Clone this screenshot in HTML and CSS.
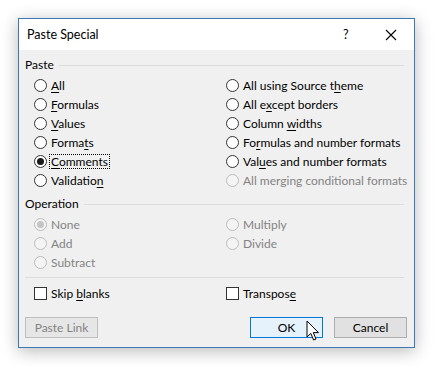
FILE: index.html
```html
<!DOCTYPE html>
<html>
<head>
<meta charset="utf-8">
<link rel="stylesheet" href="styles.css">
</head>
<body>
<div class="dialog">
  <div class="titlebar">
    <span class="title">Paste Special</span>
    <span class="help">?</span>
    <span class="close"><svg width="12" height="12" viewBox="0 0 12 12"><path d="M1 1L11 11M11 1L1 11" stroke="#000" stroke-width="1.1" fill="none"/></svg></span>
  </div>
  <div class="content">
    <div class="group-head"><span>Paste</span><i class="rule"></i></div>
    <div class="grid">
      <div class="opt"><span class="radio"></span><span class="lbl"><u>A</u>ll</span></div>
      <div class="opt"><span class="radio"></span><span class="lbl">All using Source t<u>h</u>eme</span></div>
      <div class="opt"><span class="radio"></span><span class="lbl"><u>F</u>ormulas</span></div>
      <div class="opt"><span class="radio"></span><span class="lbl">All e<u>x</u>cept borders</span></div>
      <div class="opt"><span class="radio"></span><span class="lbl"><u>V</u>alues</span></div>
      <div class="opt"><span class="radio"></span><span class="lbl">Column <u>w</u>idths</span></div>
      <div class="opt"><span class="radio"></span><span class="lbl">Forma<u>t</u>s</span></div>
      <div class="opt"><span class="radio"></span><span class="lbl">Fo<u>r</u>mulas and number formats</span></div>
      <div class="opt"><span class="radio checked"></span><span class="lbl focus"><u>C</u>omments</span></div>
      <div class="opt"><span class="radio"></span><span class="lbl">Val<u>u</u>es and number formats</span></div>
      <div class="opt"><span class="radio"></span><span class="lbl">Validatio<u>n</u></span></div>
      <div class="opt dis"><span class="radio"></span><span class="lbl">All merging conditional formats</span></div>
    </div>
    <div class="group-head op"><span>Operation</span><i class="rule"></i></div>
    <div class="grid">
      <div class="opt dis"><span class="radio checked"></span><span class="lbl">None</span></div>
      <div class="opt dis"><span class="radio"></span><span class="lbl">Multiply</span></div>
      <div class="opt dis"><span class="radio"></span><span class="lbl">Add</span></div>
      <div class="opt dis"><span class="radio"></span><span class="lbl">Divide</span></div>
      <div class="opt dis"><span class="radio"></span><span class="lbl">Subtract</span></div>
    </div>
    <div class="sep"></div>
    <div class="grid">
      <div class="opt"><span class="check"></span><span class="lbl">Skip <u>b</u>lanks</span></div>
      <div class="opt"><span class="check"></span><span class="lbl">Transpos<u>e</u></span></div>
    </div>
    <div class="buttons">
      <span class="btn disabled">Paste Link</span>
      <span class="spacer"></span>
      <span class="btn default">OK
        <svg class="cursor" width="14" height="22" viewBox="0 0 14 22"><path d="M1 1V17L4.8 13.4L7.6 20L10 19L7.3 12.6H12.5Z" fill="#fff" stroke="#000" stroke-width="1" stroke-linejoin="miter"/></svg>
      </span>
      <span class="btn">Cancel</span>
    </div>
  </div>
</div>
</body>
</html>
```
FILE: styles.css
```css
html, body {
  margin: 0;
  padding: 0;
  background: #ffffff;
}
body {
  padding: 18px;
  font-family: "Segoe UI", "Lato", "Noto Sans", sans-serif;
  font-size: 12px;
  color: #000;
}
.dialog {
  width: 395px;
  height: 328px;
  border: 1px solid #3b79b6;
  background: #f0f0f0;
  box-shadow: 0 3px 16px rgba(0, 0, 0, 0.28);
  display: flex;
  flex-direction: column;
}
.titlebar {
  height: 31px;
  background: #ffffff;
  display: flex;
  align-items: center;
  padding-left: 8px;
}
.title {
  flex: 1;
  font-size: 12.5px;
}
.help {
  width: 8px;
  margin-right: 34px;
  font-size: 12.5px;
}
.close {
  width: 12px;
  height: 12px;
  margin-right: 17px;
  display: flex;
}
.content {
  padding: 5px 7px 8px 6px;
  display: flex;
  flex-direction: column;
}
.group-head {
  height: 19px;
  display: flex;
  align-items: center;
  gap: 5px;
  margin-bottom: 2px;
  margin-right: 3px;
}
.group-head.op {
  margin-top: 4px;
}
.rule {
  flex: 1;
  height: 1px;
  background: #dcdcdc;
  margin-top: 1px;
}
.grid {
  display: grid;
  grid-template-columns: 192px 1fr;
  padding-left: 9px;
}
.opt {
  height: 19px;
  display: flex;
  align-items: center;
  white-space: nowrap;
}
.radio {
  width: 11px;
  height: 11px;
  border: 1px solid #333;
  border-radius: 50%;
  background: #fff;
  margin-right: 2px;
  position: relative;
  flex: none;
}
.radio.checked::after {
  content: "";
  position: absolute;
  left: 2px;
  top: 2px;
  width: 7px;
  height: 7px;
  border-radius: 50%;
  background: #1a1a1a;
}
.dis .radio {
  border-color: #bcbcbc;
  background: #f4f4f4;
}
.dis .radio.checked::after {
  background: #c4c4c4;
}
.dis .lbl {
  color: #838383;
}
.lbl {
  padding: 0 1px;
  border: 1px dotted transparent;
  line-height: 13px;
}
.lbl.focus {
  border-color: #000;
}
u {
  text-decoration-thickness: 1px;
  text-underline-offset: 2px;
}
.sep {
  height: 1px;
  background: #dcdcdc;
  margin: 5px 3px 6px 0;
}
.check {
  width: 11px;
  height: 11px;
  border: 1px solid #333;
  background: #fff;
  margin-right: 2px;
  flex: none;
}
.buttons {
  display: flex;
  margin-top: 14px;
  gap: 11px;
}
.spacer {
  flex: 1;
}
.btn {
  width: 71px;
  height: 19px;
  border: 1px solid #adadad;
  background: #e1e1e1;
  display: flex;
  align-items: center;
  justify-content: center;
  position: relative;
}
.btn.disabled {
  background: #e6e6e6;
  border-color: #bfbfbf;
  color: #838383;
}
.btn.default {
  background: #e5f1fb;
  border-color: #0078d7;
}
.cursor {
  position: absolute;
  left: 55px;
  top: 2px;
}
```
